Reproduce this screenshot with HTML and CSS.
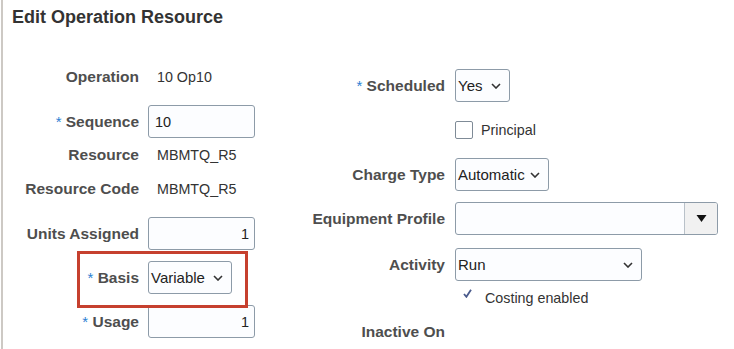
FILE: index.html
```html
<!DOCTYPE html>
<html>
<head>
<meta charset="utf-8">
<link rel="stylesheet" href="styles.css">
</head>
<body>
<div class="page">
  <h1 class="title">Edit Operation Resource</h1>
  <div class="form">
    <div class="col col-left">
      <div class="row text-row">
        <div class="label">Operation</div>
        <div class="value">10 Op10</div>
      </div>
      <div class="row field-row">
        <div class="label"><span class="req">*</span> Sequence</div>
        <div class="input w107">10</div>
      </div>
      <div class="row text-row">
        <div class="label">Resource</div>
        <div class="value">MBMTQ_R5</div>
      </div>
      <div class="row text-row">
        <div class="label">Resource Code</div>
        <div class="value">MBMTQ_R5</div>
      </div>
      <div class="row field-row">
        <div class="label">Units Assigned</div>
        <div class="input w107 num">1</div>
      </div>
      <div class="row field-row">
        <div class="label"><span class="req">*</span> Basis</div>
        <div class="select w84"><span>Variable</span><svg class="chev" viewBox="0 0 10 6" width="10" height="6"><path d="M1 1 L5 5 L9 1" fill="none" stroke="#333" stroke-width="1.6"/></svg></div>
      </div>
      <div class="row field-row">
        <div class="label"><span class="req">*</span> Usage</div>
        <div class="input w107 num">1</div>
      </div>
      <div class="row field-row">
        <div class="label"></div>
        <div class="input w107"></div>
      </div>
      <div class="highlight"></div>
    </div>
    <div class="col col-right">
      <div class="row field-row first">
        <div class="label"><span class="req">*</span> Scheduled</div>
        <div class="select w55"><span>Yes</span><svg class="chev" viewBox="0 0 10 6" width="10" height="6"><path d="M1 1 L5 5 L9 1" fill="none" stroke="#333" stroke-width="1.6"/></svg></div>
      </div>
      <div class="row text-row spaced">
        <div class="label"></div>
        <div class="check-wrap"><span class="checkbox"></span><span class="value">Principal</span></div>
      </div>
      <div class="row field-row">
        <div class="label">Charge Type</div>
        <div class="select w94"><span>Automatic</span><svg class="chev" viewBox="0 0 10 6" width="10" height="6"><path d="M1 1 L5 5 L9 1" fill="none" stroke="#333" stroke-width="1.6"/></svg></div>
      </div>
      <div class="row field-row">
        <div class="label">Equipment Profile</div>
        <div class="combo"><span class="combo-text"></span><span class="combo-btn"><svg viewBox="0 0 10 7" width="11" height="7"><path d="M0 0 L10 0 L5 7 Z" fill="#111"/></svg></span></div>
      </div>
      <div class="row field-row act">
        <div class="label">Activity</div>
        <div class="select w187"><span>Run</span><svg class="chev" viewBox="0 0 10 6" width="10" height="6"><path d="M1 1 L5 5 L9 1" fill="none" stroke="#333" stroke-width="1.6"/></svg></div>
      </div>
      <div class="row text-row">
        <div class="label"></div>
        <div class="costing"><svg class="tick" viewBox="0 0 9 9" width="9" height="9"><path d="M1 5 L3.4 7.8 L8 0.8" fill="none" stroke="#4b5b8c" stroke-width="1.8"/></svg><span class="value">Costing enabled</span></div>
      </div>
      <div class="row text-row">
        <div class="label">Inactive On</div>
        <div class="value"></div>
      </div>
    </div>
  </div>
</div>
</body>
</html>
```

FILE: styles.css
```css
html, body {
  margin: 0;
  padding: 0;
  background: #fff;
  height: 100%;
  overflow: hidden;
}

body {
  font-family: "Liberation Sans", Arial, sans-serif;
}

.page {
  margin-left: 1px;
  border-left: 2px solid #cdc9c4;
  height: 349px;
  box-sizing: border-box;
  overflow: hidden;
}

.title {
  margin: 0;
  padding: 7px 0 0 9px;
  font-size: 18px;
  line-height: 20px;
  font-weight: bold;
  color: #333;
}

.form {
  display: flex;
  margin-top: 33px;
}

.col {
  display: flex;
  flex-direction: column;
  position: relative;
}

.col-left {
  width: 297px;
}

.col-left .label {
  width: 136px;
  margin-right: 9px;
}

.col-left .value {
  padding-left: 9px;
}

.col-right .label {
  width: 145px;
  margin-right: 10px;
}

.row {
  display: flex;
  align-items: center;
}

.text-row {
  height: 34px;
}

.field-row {
  height: 33px;
  margin-top: 11px;
}

.col-right .first {
  margin-top: 9px;
}

.col-right .spaced {
  margin-top: 11px;
}

.col-right .act {
  margin-top: 13px;
}

.label {
  flex: none;
  text-align: right;
  font-size: 15.5px;
  font-weight: bold;
  color: #4e4e4e;
  white-space: nowrap;
}

.req {
  color: #2d7fd3;
  font-weight: normal;
  font-size: 15px;
}

.value {
  font-size: 14.3px;
  color: #333;
  white-space: nowrap;
}

.input,
.select,
.combo {
  box-sizing: border-box;
  height: 33px;
  border: 1.5px solid #8d9ba8;
  border-radius: 3px;
  background: #fcfdff;
  display: flex;
  align-items: center;
  color: #222;
}

.input {
  padding: 0 5px 0 6px;
  font-size: 14.5px;
}

.input.num {
  justify-content: flex-end;
}

.select {
  padding: 0 8px 0 2px;
  justify-content: space-between;
  font-size: 15px;
}

.chev {
  flex: none;
}

.w107 { width: 107px; }
.w84 { width: 84px; }
.w55 { width: 55px; }
.w94 { width: 94px; }
.w187 { width: 187px; }

.combo {
  width: 263px;
  overflow: hidden;
}

.combo-text {
  flex: 1;
}

.combo-btn {
  width: 32px;
  height: 100%;
  background: #f1f1f1;
  border-left: 1px solid #b9c1c9;
  display: flex;
  align-items: center;
  justify-content: center;
}

.check-wrap {
  display: flex;
  align-items: center;
  gap: 8px;
}

.checkbox {
  width: 18px;
  height: 18px;
  box-sizing: border-box;
  border: 1.5px solid #7f8b97;
  border-radius: 2px;
  background: #fff;
}

.costing {
  display: flex;
  align-items: center;
  padding-left: 8px;
  gap: 13px;
}

.tick {
  position: relative;
  top: -5px;
}

.highlight {
  position: absolute;
  left: 74px;
  top: 191px;
  width: 171px;
  height: 57px;
  box-sizing: border-box;
  border: 3.5px solid #c6402e;
}
```
